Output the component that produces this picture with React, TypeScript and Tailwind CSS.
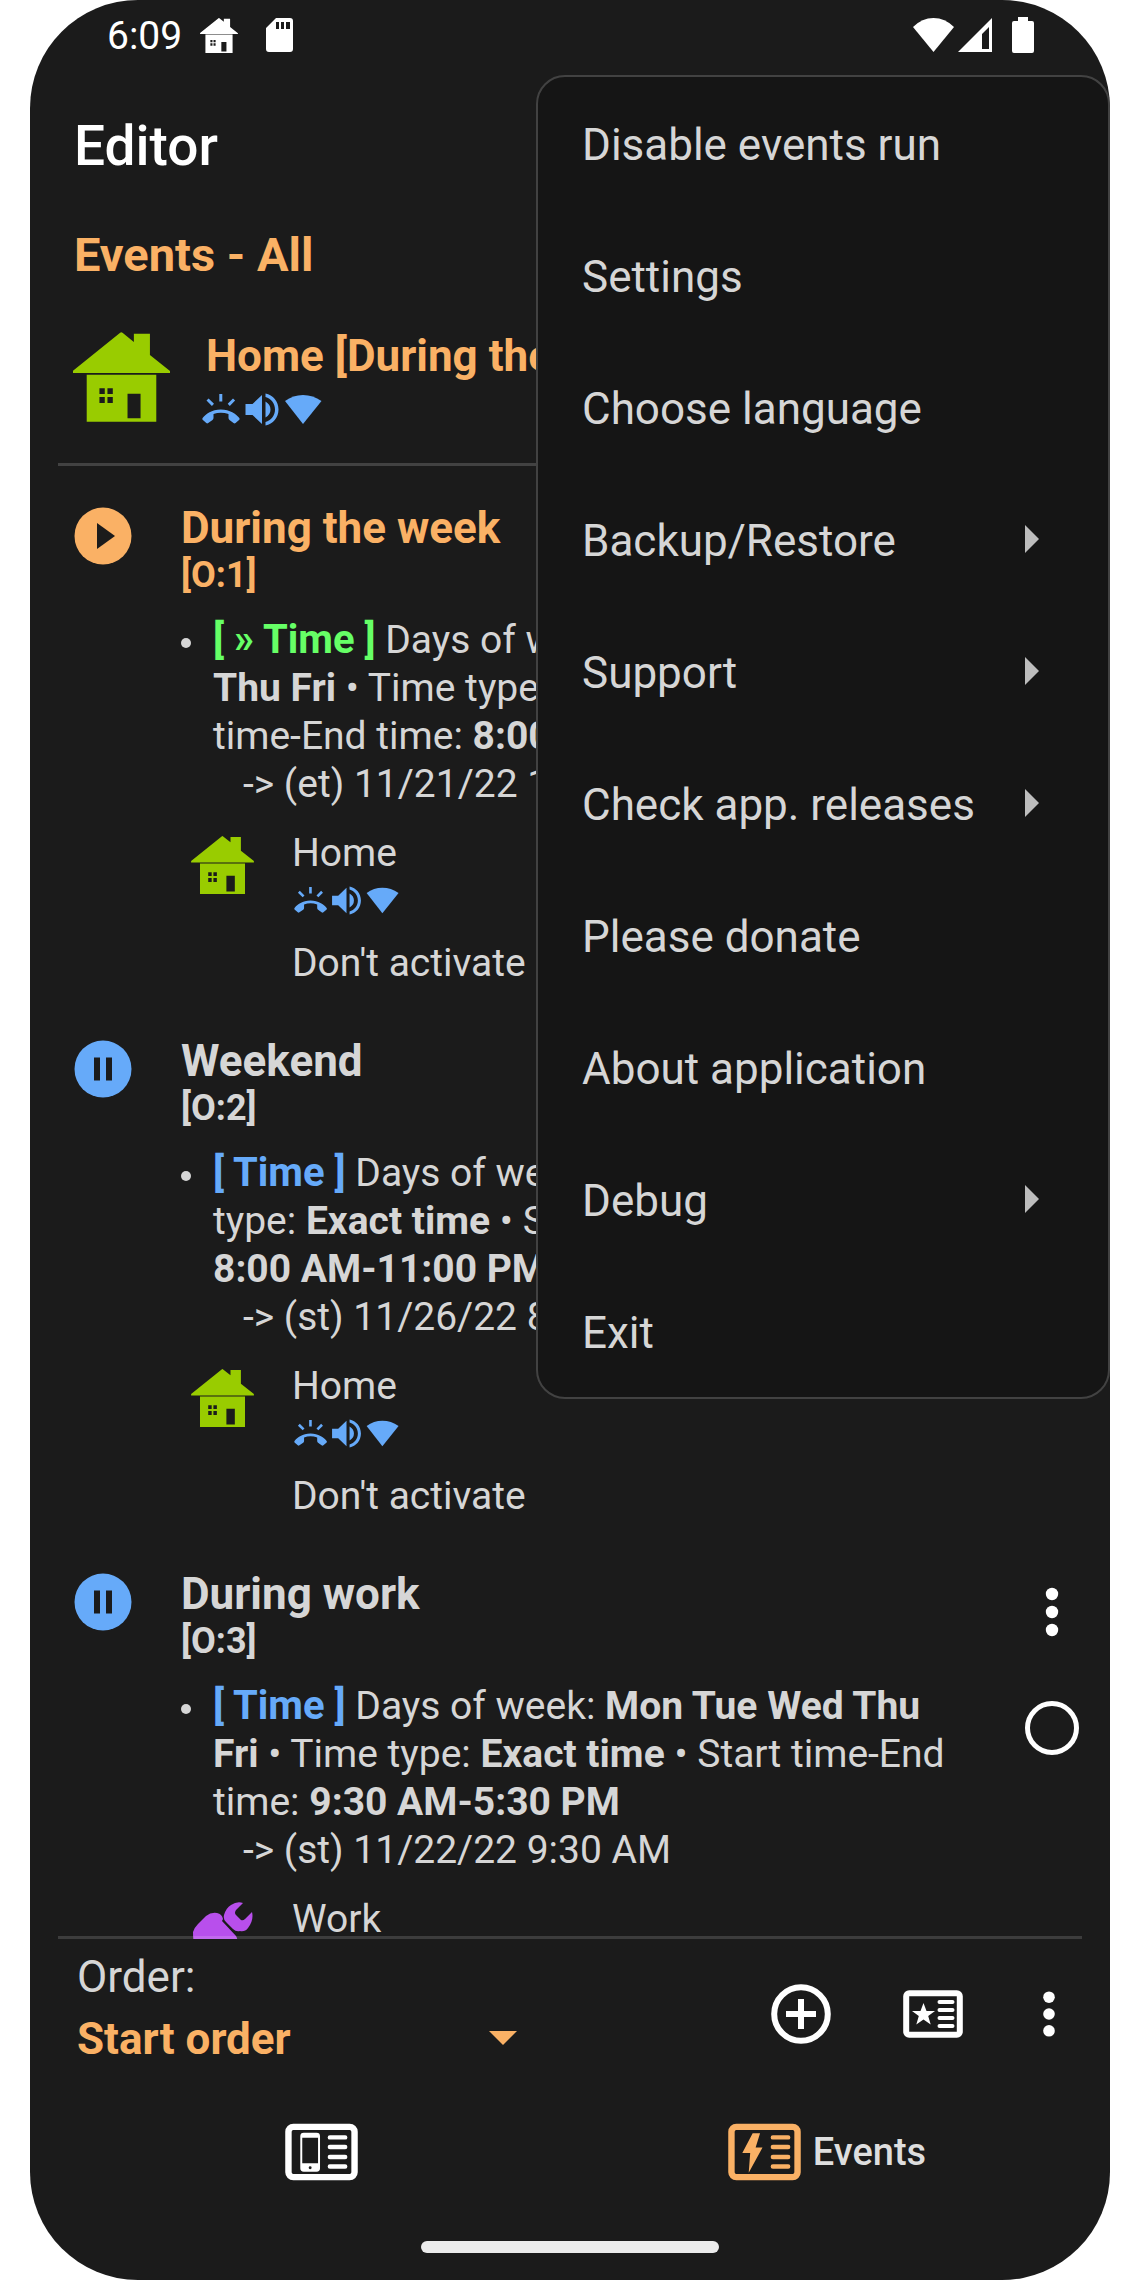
import React from "react";

type IconProps = { className?: string };

function HouseIcon({ className }: IconProps) {
  return (
    <svg viewBox="0 0 290 268" className={className} fill="currentColor" aria-hidden="true">
      <path d="M0 122V115L141 2Q144 -1 148 2L182 29V5H230V68L290 116V122Z" />
      <path
        fillRule="evenodd"
        d="M41 127H249V268H41ZM79 168V185H95V168ZM103 168V185H119V168ZM79 194V212H95V194ZM103 194V212H119V194ZM163 184V257H202V184Z"
      />
    </svg>
  );
}

function WorkIcon({ className }: IconProps) {
  return (
    <svg viewBox="0 0 60 60" className={className} fill="currentColor" aria-hidden="true">
      <path d="M0 30Q1 26 5 22L13 14Q18 10 24 11Q29 12 30 17L29 19L43 34Q45 37 44 41V60H8Q0 48 0 30Z" />
      <path d="M31 13Q33 6 38 3Q44 -1 50 1L43 8Q41 11 43 13L48 18Q50 19 52 17L59 10Q61 18 55 26Q52 30 47 29Q43 30 40 27L33 20Q30 17 31 13Z" />
    </svg>
  );
}

function SdCardIcon({ className }: IconProps) {
  return (
    <svg viewBox="0 0 27 34" className={className} fill="currentColor" aria-hidden="true">
      <path
        fillRule="evenodd"
        d="M10 0H24Q27 0 27 3V31Q27 34 24 34H3Q0 34 0 31V10ZM10 4V11H13V4ZM15 4V11H18V4ZM20 4V11H24V4Z"
      />
    </svg>
  );
}

function WifiIcon({ className }: IconProps) {
  return (
    <svg viewBox="0 0 41 34" className={className} fill="currentColor" aria-hidden="true">
      <path d="M20.500 34L0 9Q9 0 20.500 0Q32 0 41 9Z" />
    </svg>
  );
}

function SignalIcon({ className }: IconProps) {
  return (
    <svg viewBox="0 0 34 34" className={className} fill="currentColor" aria-hidden="true">
      <path fillRule="evenodd" d="M34 0V34H0ZM31 9L24 16V31H31Z" />
    </svg>
  );
}

function BatteryIcon({ className }: IconProps) {
  return (
    <svg viewBox="0 0 22 36" className={className} fill="currentColor" aria-hidden="true">
      <path d="M6 0H16V4H20Q22 4 22 6V34Q22 36 20 36H2Q0 36 0 34V6Q0 4 2 4H6Z" />
    </svg>
  );
}

/* Ringer, volume and Wi-Fi shown below a profile name */
function ProfileIndicators({ className }: IconProps) {
  return (
    <svg viewBox="0 0 120 33" className={className} fill="#66aaf9" role="img" aria-label="Ringer, volume, Wi-Fi">
      <path d="M17.300 1H20.300V8.500H17.300ZM4.500 7.500L6.600 5.400L12 10.800L9.900 12.900ZM25.700 10.800L31 5.400L33.100 7.500L27.800 12.900Z" />
      <path d="M18.800 16.500C28 16.500 34 21 37.300 25Q38 26 37.300 26.800L33.600 30Q32.600 30.800 31.500 30L27.500 27Q26.500 26 26.500 25V21Q18.800 18.500 11.500 21V25Q11.500 26 10.500 27L6.200 30Q5.200 30.800 4.300 30L.6 26.800Q0 26 .6 25C4 21 9.600 16.500 18.800 16.500Z" />
      <path d="M43.500 11H50.500L60 2V31L50.500 22H43.500ZM63.500 8.500Q68.500 11.500 68.500 16.500Q68.500 21.500 63.500 24.500Z" />
      <path d="M63.500 .500C71 2 76.500 8.500 76.500 16.500C76.500 24.500 71 31 63.500 32.500V29C69 27.500 73 22.500 73 16.500C73 10.500 69 5.500 63.500 4Z" />
      <path d="M101 31L83 8Q91 2 101 2Q111 2 119.500 8Z" />
    </svg>
  );
}

function MoreIcon({ className }: IconProps) {
  return (
    <svg viewBox="0 0 28 60" className={className} fill="currentColor" aria-hidden="true">
      <circle cx="14" cy="12" r="6.200" />
      <circle cx="14" cy="30" r="6.200" />
      <circle cx="14" cy="48" r="6.200" />
    </svg>
  );
}

function PlayIcon({ className }: IconProps) {
  return (
    <svg viewBox="0 0 58 58" className={className} aria-label="Running" role="img">
      <circle cx="29" cy="29" r="28.500" fill="#fab165" />
      <path d="M23 16L41 29L23 42Z" fill="#1b1b1b" />
    </svg>
  );
}

function PauseIcon({ className }: IconProps) {
  return (
    <svg viewBox="0 0 58 58" className={className} aria-label="Paused" role="img">
      <circle cx="29" cy="29" r="28.500" fill="#66aaf9" />
      <path d="M20 17.500H26V40.500H20ZM32 17.500H38V40.500H32Z" fill="#1b1b1b" />
    </svg>
  );
}

function AddIcon({ className }: IconProps) {
  return (
    <svg viewBox="0 0 60 60" className={className} fill="none" stroke="currentColor" strokeWidth="6" aria-hidden="true">
      <circle cx="30" cy="30" r="26.800" />
      <path d="M30 15V45M15 30H45" />
    </svg>
  );
}

function StarCardIcon({ className }: IconProps) {
  return (
    <svg viewBox="0 0 60 48" className={className} aria-hidden="true">
      <rect x="3.200" y="3.200" width="53.600" height="41.600" rx="3" fill="none" stroke="currentColor" strokeWidth="6" />
      <path d="M20.500 13L23.500 21H32L25.200 26L27.700 34.500L20.500 29.500L13.300 34.500L15.800 26L9 21H17.500Z" fill="currentColor" />
      <path d="M36.500 12H49.500M36.500 20H49.500M36.500 28H49.500M36.500 36H49.500" stroke="currentColor" strokeWidth="4" strokeLinecap="round" />
    </svg>
  );
}

function ProfilesTabIcon({ className }: IconProps) {
  return (
    <svg viewBox="0 0 74 58" className={className} aria-hidden="true">
      <rect x="3.500" y="3.500" width="67" height="51" rx="5" fill="none" stroke="currentColor" strokeWidth="6.500" />
      <path
        fillRule="evenodd"
        fill="currentColor"
        d="M19 9.500H32Q35.500 9.500 35.500 13V45.500Q35.500 49 32 49H19Q15.500 49 15.500 45.500V13Q15.500 9.500 19 9.500ZM17.500 14.500V40.500H33.500V14.500ZM24 45A1.500 1.500 0 1 0 27 45A1.500 1.500 0 1 0 24 45Z"
      />
      <path d="M45.500 14.200H61M45.500 24H61M45.500 34H61M45.500 43.700H61" stroke="currentColor" strokeWidth="4.500" strokeLinecap="round" />
    </svg>
  );
}

function EventsTabIcon({ className }: IconProps) {
  return (
    <svg viewBox="0 0 74 58" className={className} aria-hidden="true">
      <rect x="3.500" y="3.500" width="67" height="51" rx="5" fill="none" stroke="currentColor" strokeWidth="6.500" />
      <path d="M25 10H32.500L28 24.500H35L21 50L22.500 30H14.500Z" fill="currentColor" />
      <path d="M45.500 14.200H61M45.500 24H61M45.500 34H61M45.500 43.700H61" stroke="currentColor" strokeWidth="4.500" strokeLinecap="round" />
    </svg>
  );
}

type EventItem = {
  title: string;
  order: string;
  running: boolean;
  sensor: string;
  days: string;
  hours: string;
  next: string;
  profile: string;
};

const events: EventItem[] = [
  {
    title: "During the week",
    order: "[O:1]",
    running: true,
    sensor: "[ » Time ]",
    days: "Mon Tue Wed Thu Fri",
    hours: "8:00 AM-11:00 PM",
    next: "-> (et) 11/21/22 11:00 PM",
    profile: "Home",
  },
  {
    title: "Weekend",
    order: "[O:2]",
    running: false,
    sensor: "[ Time ]",
    days: "Sat Sun",
    hours: "8:00 AM-11:00 PM",
    next: "-> (st) 11/26/22 8:00 AM",
    profile: "Home",
  },
  {
    title: "During work",
    order: "[O:3]",
    running: false,
    sensor: "[ Time ]",
    days: "Mon Tue Wed Thu Fri",
    hours: "9:30 AM-5:30 PM",
    next: "-> (st) 11/22/22 9:30 AM",
    profile: "Work",
  },
];

const menu = [
  { label: "Disable events run", sub: false },
  { label: "Settings", sub: false },
  { label: "Choose language", sub: false },
  { label: "Backup/Restore", sub: true },
  { label: "Support", sub: true },
  { label: "Check app. releases", sub: true },
  { label: "Please donate", sub: false },
  { label: "About application", sub: false },
  { label: "Debug", sub: true },
  { label: "Exit", sub: false },
];

function EventRow({ event }: { event: EventItem }) {
  const titleColor = event.running ? "text-[#fab165]" : "text-[#d6d6d6]";
  const sensorColor = event.running ? "text-[#66ff66]" : "text-[#66aaf9]";
  return (
    <li className="flex items-start pb-12">
      <div className="mt-[5px] mr-[49px] shrink-0">
        {event.running ? <PlayIcon className="size-[58px]" /> : <PauseIcon className="size-[58px]" />}
      </div>
      <div className="min-w-0 flex-1">
        <h3 className={`text-[44px] leading-[52px] font-bold ${titleColor}`}>{event.title}</h3>
        <p className={`text-[36px] leading-[42px] font-bold ${titleColor}`}>{event.order}</p>
        <div className="mt-5 flex text-[39px] leading-[48px]">
          <span className="mt-[22px] mr-[22px] size-2.5 shrink-0 rounded-full bg-[#d6d6d6]" />
          <div className="min-w-0 flex-1">
            <p>
              <b className={`text-[40px] ${sensorColor}`}>{event.sensor}</b> Days of week: <b>{event.days}</b> • Time
              type: <b>Exact time</b> • Start <span className="whitespace-nowrap">time-End</span> time:{" "}
              <b className="whitespace-nowrap">{event.hours}</b>
            </p>
            <p className="pl-[30px]">{event.next}</p>
          </div>
        </div>
        <div className="mt-[21px] flex items-start pl-2.5 text-[39px] leading-[48px]">
          <div className="mr-[37px] w-16 shrink-0 pt-[7px]">
            {event.profile === "Work" ? (
              <WorkIcon className="mx-auto size-[60px] text-[#b84fec]" />
            ) : (
              <HouseIcon className="h-[58px] w-[63px] text-[#99cc00]" />
            )}
          </div>
          <div>
            <p>{event.profile}</p>
            <ProfileIndicators className="mt-[9px] ml-0.5 h-[29px] w-[105px]" />
            <p className="mt-6">Don't activate</p>
          </div>
        </div>
      </div>
      <div className="ml-[77px] flex w-[58px] shrink-0 flex-col items-center gap-[59px] pt-[14px] text-white">
        <button type="button" aria-label={`${event.title} options`}>
          <MoreIcon className="h-[60px] w-7" />
        </button>
        <input
          type="radio"
          name="manual"
          aria-label={`Ignore manual activation: ${event.title}`}
          className="size-[54px] appearance-none rounded-full border-[5px] border-white"
        />
      </div>
    </li>
  );
}

export default function App() {
  return (
    <div className="h-screen bg-white px-[30px] font-['Roboto',sans-serif] text-[#d6d6d6]">
      <div className="relative flex h-full flex-col overflow-hidden rounded-[108px] bg-[#1b1b1b]">
        <div className="flex h-[70px] shrink-0 items-center pr-[76px] pl-[77px] text-white">
          <span className="pt-0.5 text-[39px] leading-[44px]">6:09</span>
          <HouseIcon className="ml-[18px] h-[35px] w-[38px]" />
          <SdCardIcon className="ml-7 h-[34px] w-[27px]" />
          <WifiIcon className="ml-auto h-[34px] w-[41px]" />
          <SignalIcon className="ml-1 h-[34px] w-[34px]" />
          <BatteryIcon className="ml-5 h-[36px] w-[22px]" />
        </div>

        <header className="flex h-[152px] shrink-0 items-center px-11">
          <h1 className="text-[55px] leading-[64px] font-medium text-white">Editor</h1>
        </header>

        <main className="flex min-h-0 flex-1 flex-col">
          <h2 className="shrink-0 px-11 text-[47px] leading-[66px] font-bold text-[#fab165]">Events - All</h2>

          <section className="mx-7 flex shrink-0 items-start border-b-[3px] border-[#424242] px-[15px] pt-[42px] pb-[33px]">
            <HouseIcon className="mt-0.5 h-[90px] w-[97px] shrink-0 text-[#99cc00]" />
            <div className="ml-8 min-w-0">
              <p className="truncate pl-1 text-[44px] leading-[52px] font-bold text-[#fab165]">Home [During the week]</p>
              <ProfileIndicators className="mt-[11px] mb-1 h-[33px] w-[120px]" />
            </div>
          </section>

          <ul className="min-h-0 flex-1 overflow-hidden pt-9 pr-[29px] pl-11">
            {events.map((event) => (
              <EventRow key={event.title} event={event} />
            ))}
          </ul>
        </main>

        <div className="relative mx-7 -mt-[3px] flex shrink-0 items-center border-t-[3px] border-white/15 text-white">
          <div className="min-w-0 flex-1 pt-3 pb-[22px] pl-[19px]">
            <label htmlFor="order" className="block text-[44px] leading-[52px] text-[#d6d6d6]">
              Order:
            </label>
            <div className="relative mt-2 w-[440px]">
              <select
                id="order"
                className="block h-14 w-full appearance-none bg-transparent text-[44px] leading-[56px] font-bold text-[#fab165]"
              >
                <option>Start order</option>
              </select>
              <svg viewBox="0 0 28 14" className="pointer-events-none absolute top-5 right-0 w-7" fill="#fab165" aria-hidden="true">
                <path d="M0 0H28L14 14Z" />
              </svg>
            </div>
          </div>
          <div className="flex items-center gap-[72px] pr-[19px]">
            <button type="button" aria-label="Add event">
              <AddIcon className="size-[60px]" />
            </button>
            <button type="button" aria-label="Event list">
              <StarCardIcon className="h-12 w-[60px]" />
            </button>
            <button type="button" aria-label="More">
              <MoreIcon className="h-14 w-7" />
            </button>
          </div>
        </div>

        <nav className="flex h-[126px] shrink-0 items-center pr-[30px] pl-[38px]">
          <button type="button" aria-label="Profiles" className="flex flex-1 justify-center text-white">
            <ProfilesTabIcon className="h-[58px] w-[73px]" />
          </button>
          <button type="button" className="flex flex-1 items-center justify-center gap-3 text-[#fab165]">
            <EventsTabIcon className="h-[58px] w-[73px]" />
            <span className="text-[38px] leading-[44px] font-medium text-[#dedede]">Events</span>
          </button>
        </nav>

        <div className="flex shrink-0 justify-center pt-[26px] pb-[27px]">
          <div className="h-3 w-[298px] rounded-full bg-[#ececec]" />
        </div>

        <div role="menu" className="absolute top-[75px] right-0 w-[574px] rounded-[29px] border-2 border-[#424242] bg-[#151515]">
          {menu.map((item) => (
            <button
              key={item.label}
              type="button"
              role="menuitem"
              className="flex h-[132px] w-full items-center justify-between pr-[69px] pl-11 text-left text-[44px] leading-[52px]"
            >
              <span className="pt-1">{item.label}</span>
              {item.sub && (
                <svg viewBox="0 0 14 28" className="h-7 w-3.5" fill="#bdbdbd" aria-hidden="true">
                  <path d="M0 0L14 14L0 28Z" />
                </svg>
              )}
            </button>
          ))}
        </div>
      </div>
    </div>
  );
}
